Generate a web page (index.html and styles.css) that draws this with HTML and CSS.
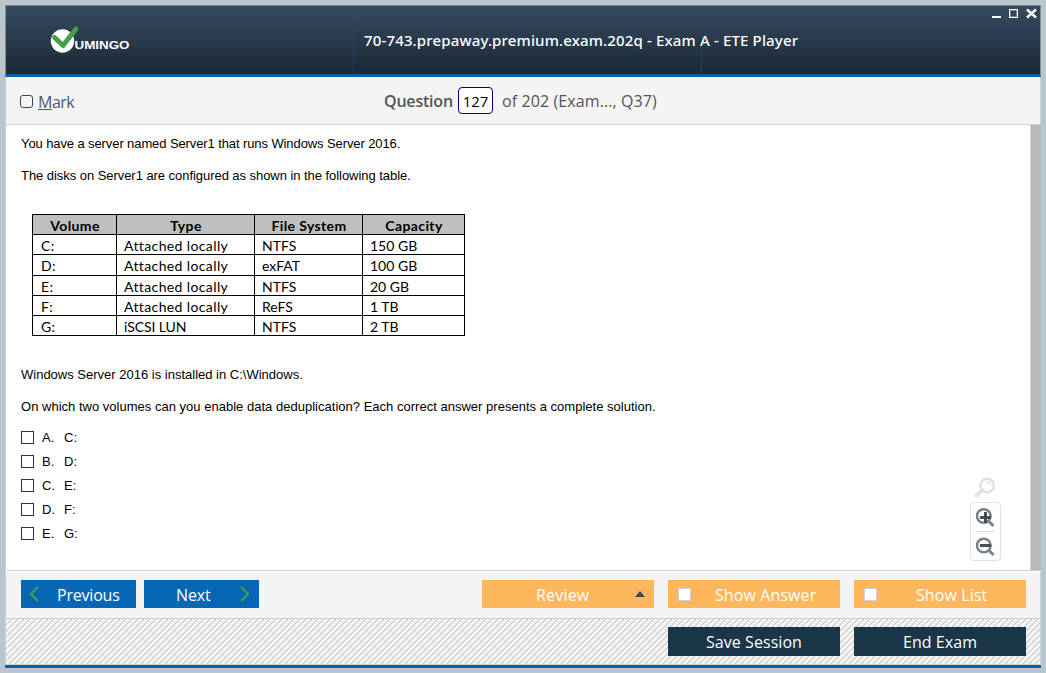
FILE: index.html
```html
<!DOCTYPE html>
<html lang="en">
<head>
<meta charset="utf-8">
<title>ETE Player</title>
<link rel="stylesheet" href="styles.css">
</head>
<body>
<div class="window">
  <header class="titlebar">
    <div class="brand">
      <svg class="logo" width="82" height="32" viewBox="0 0 82 32">
        <circle cx="12.5" cy="17" r="11.7" fill="#fff"/>
        <path d="M4.500 13.500 L13 21.500 L26 5" fill="none" stroke="#43a047" stroke-width="5" stroke-linecap="round" stroke-linejoin="round"/>
        <text x="24.500" y="25" textLength="55" lengthAdjust="spacingAndGlyphs" class="logo-text">UMINGO</text>
      </svg>
    </div>
    <h1 class="title">70-743.prepaway.premium.exam.202q - Exam A - ETE Player</h1>
    <div class="controls">
      <svg width="46" height="12" viewBox="0 0 46 12">
        <path d="M0 10h9" stroke="#fff" stroke-width="2"/>
        <rect x="17.5" y="2.5" width="8" height="8" fill="none" stroke="#fff"/>
        <rect x="18.5" y="3.5" width="6" height="6" fill="none" stroke="#7b7d80"/>
        <path d="M35 2.500l9 8M44 2.500l-9 8" stroke="#fff" stroke-width="2.4"/>
      </svg>
    </div>
  </header>
  <div class="toolbar">
    <div class="mark"><i class="mark-box"></i><span class="mark-text"><u>M</u>ark</span></div>
    <div class="counter"><b>Question</b><span class="number">127</span><span class="total">of 202 (Exam..., Q37)</span></div>
  </div>
  <main class="body">
    <div class="question">
      <p class="q1">You have a server named Server1 that runs Windows Server 2016.</p>
      <p class="q2">The disks on Server1 are configured as shown in the following table.</p>
      <table class="disks">
        <colgroup><col class="c1"><col class="c2"><col class="c3"><col class="c4"></colgroup>
        <tr><th>Volume</th><th>Type</th><th>File System</th><th>Capacity</th></tr>
        <tr><td>C:</td><td>Attached locally</td><td>NTFS</td><td>150 GB</td></tr>
        <tr class="tall"><td>D:</td><td>Attached locally</td><td>exFAT</td><td>100 GB</td></tr>
        <tr><td>E:</td><td>Attached locally</td><td>NTFS</td><td>20 GB</td></tr>
        <tr><td>F:</td><td>Attached locally</td><td>ReFS</td><td>1 TB</td></tr>
        <tr><td>G:</td><td>iSCSI LUN</td><td>NTFS</td><td>2 TB</td></tr>
      </table>
      <p class="q3">Windows Server 2016 is installed in C:\Windows.</p>
      <p class="q4">On which two volumes can you enable data deduplication? Each correct answer presents a complete solution.</p>
      <ul class="choices">
        <li><i class="box"></i><span class="letter">A.</span><span>C:</span></li>
        <li><i class="box"></i><span class="letter">B.</span><span>D:</span></li>
        <li><i class="box"></i><span class="letter">C.</span><span>E:</span></li>
        <li><i class="box"></i><span class="letter">D.</span><span>F:</span></li>
        <li><i class="box"></i><span class="letter">E.</span><span>G:</span></li>
      </ul>
    </div>
    <div class="zoom">
      <svg class="lens" width="22" height="22" viewBox="0 0 22 22" fill="none" stroke="#e0e0e0">
        <circle cx="13" cy="8.500" r="6.800" stroke-width="2.400"/>
        <path d="M13 5a3.500 3.500 0 0 1 3.500 3.500" stroke-width="1.500"/>
        <path d="M8.500 13L2.500 18.500" stroke-width="3.400" stroke-linecap="round"/>
      </svg>
      <div class="zoom-panel">
        <svg width="20" height="20" viewBox="0 0 20 20" fill="none">
          <circle cx="7.800" cy="8" r="6.800" stroke="#74838e" stroke-width="2.500"/>
          <path d="M12.500 13L17.500 18" stroke="#74838e" stroke-width="3"/>
          <path d="M4 9.500h11M9.500 4v11" stroke="#4d4d4d" stroke-width="3"/>
        </svg>
        <hr>
        <svg width="20" height="20" viewBox="0 0 20 20" fill="none">
          <circle cx="7.800" cy="8.500" r="6.800" stroke="#74838e" stroke-width="2.500"/>
          <path d="M12.500 13L17.500 18" stroke="#74838e" stroke-width="3"/>
          <path d="M4 8.500h11" stroke="#4d4d4d" stroke-width="3"/>
        </svg>
      </div>
    </div>
    <div class="scrollbar"></div>
  </main>
  <div class="navbar">
    <div class="btn blue prev"><svg width="10" height="16" viewBox="0 0 10 16"><path d="M9 1L2 8l7 7" fill="none" stroke="#43a047" stroke-width="2.2"/></svg><span>Previous</span></div>
    <div class="btn blue next"><span>Next</span><svg width="10" height="16" viewBox="0 0 10 16"><path d="M1 1l7 7l-7 7" fill="none" stroke="#43a047" stroke-width="2.2"/></svg></div>
    <div class="btn orange review"><span>Review</span><svg width="10" height="6" viewBox="0 0 10 6"><path d="M5 0L10 6H0z" fill="#34495e"/></svg></div>
    <div class="btn orange check"><i></i><span class="answer">Show Answer</span></div>
    <div class="btn orange check"><i></i><span class="list">Show List</span></div>
  </div>
  <footer class="actions">
    <svg class="hatch" width="1034" height="45">
      <defs><pattern id="stripes" width="6" height="6" patternUnits="userSpaceOnUse"><path d="M-1 7L7-1M-1 1L1-1M5 7L7 5" stroke="#bcbcbc" stroke-width="1"/></pattern></defs>
      <rect width="1034" height="45" fill="url(#stripes)"/>
    </svg>
    <div class="btn dark"><span class="save">Save Session</span></div>
    <div class="btn dark"><span class="end">End Exam</span></div>
  </footer>
</div>
</body>
</html>
```
FILE: styles.css
```css
* { box-sizing: border-box; }
body { margin: 0; padding: 5px; width: 1046px; height: 673px; overflow: hidden; background: #b9c6cc; font-family: "Liberation Sans", Arial, sans-serif; }
.window { width: 1036px; height: 663px; display: flex; flex-direction: column; background: #fff; }
.titlebar { height: 72px; display: grid; grid-template-columns: 348px 348px 1fr; background: linear-gradient(#354c60, #1b2835); border: 1px solid #7e8d94; border-top-color: #77898f; border-bottom: 3px solid #0560b0; flex: none; }
.brand { padding: 18px 0 0 44px; border-right: 1px dotted #30418c; }
.logo { display: block; }
.logo-text { font: bold 10.5px "Liberation Sans", sans-serif; fill: #fff; }
.title { margin: 0; padding: 22px 0 0 10px; border-right: 1px solid #2c4052; font: 500 15px/24px "Noto Sans", sans-serif; letter-spacing: .15px; color: #fff; white-space: nowrap; }
.controls { padding: 1px 0 0 290px; }
.controls svg { display: block; }
.toolbar { height: 48px; flex: none; display: grid; grid-template-columns: 363px 1fr; background: #f4f4f4; border: 1px solid #d0d0d0; border-top: 0; font-family: "Open Sans", sans-serif; color: #555; }
.mark { display: flex; padding: 13px 0 0 14px; font-size: 16px; line-height: 24px; color: #4b5a68; }
.mark-box { width: 13px; height: 13px; margin-top: 5px; border: 1px solid #34495e; border-radius: 3px; }
.mark-text { margin-left: 5px; letter-spacing: -.5px; }
.counter { display: flex; padding: 10px 0 0 15px; font-size: 16px; line-height: 28px; white-space: nowrap; }
.counter b { width: 74px; font-weight: 600; letter-spacing: -.2px; }
.number { width: 35px; height: 27px; line-height: 27px; border: 1px solid #00008b; border-radius: 4px; background: #fff; color: #000; text-align: center; font-size: 15px; }
.total { margin-left: 9px; letter-spacing: .1px; }
.body { height: 446px; flex: none; display: grid; grid-template-columns: 964px 60px 11px; border-bottom: 1px solid #d0d0d0; border-left: 1px solid #d0d0d0; }
.question { padding-left: 15px; font-size: 13px; line-height: 16px; }
.question p { margin: 16px 0 0; white-space: nowrap; }
.question .q1 { margin-top: 11px; letter-spacing: -.1px; }
.q2 { letter-spacing: -.05px; }
.q4 { letter-spacing: .015px; }
.disks { margin: 30px 0 0 11px; border-collapse: collapse; table-layout: fixed; width: 433px; font: 14px/18px Lato, sans-serif; letter-spacing: .38px; }
.c1 { width: 84px; } .c2 { width: 138px; } .c3 { width: 108px; } .c4 { width: 102px; }
.disks tr { height: 20px; }
.disks .tall { height: 21px; }
.disks th, .disks td { border: 1px solid #000; padding: 2px 0 0 7px; line-height: 17px; text-align: left; white-space: nowrap; }
.disks .tall td { padding-top: 0; }
.disks td:first-child { padding-left: 8px; }
.disks td:nth-child(3), .disks td:nth-child(4) { letter-spacing: 0; }
.disks tr:last-child td:nth-child(2) { letter-spacing: -.1px; }
.disks th { background: #bfbfbf; text-align: center; padding-left: 1px; font-weight: 700; }
.question .q3 { margin-top: 31px; }
.choices { list-style: none; margin: 15px 0 0; padding: 0; }
.choices li { display: flex; height: 24px; line-height: 16px; }
.box { width: 13px; height: 13px; margin: 1px 8px 0 0; border: 1px solid #333; }
.letter { width: 22px; }
.zoom { padding-top: 352px; }
.lens { display: block; margin-left: 4px; }
.zoom-panel { width: 31px; height: 59px; margin-top: 3px; padding: 5px 5px 0; border: 1px solid #e2e2e2; border-radius: 4px; }
.zoom-panel svg { display: block; }
.zoom-panel hr { height: 1px; margin: 3px 0 5px; border: 0; background: #ddd; }
.scrollbar { background: #bcbab6; border-left: 1px solid #d0d0d0; }
.navbar { height: 48px; flex: none; display: flex; padding: 8px 0 0 15px; background: #f4f4f4; border: 1px solid #d0d0d0; border-top-color: #fff; }
.btn { display: flex; align-items: center; height: 28px; flex: none; color: #fff; font: 16px/28px "Open Sans", sans-serif; white-space: nowrap; }
.btn span { padding-top: 2px; letter-spacing: -.1px; }
.btn svg { flex: none; }
.blue { width: 115px; margin-right: 8px; background: #0767b4; }
.prev { padding-left: 8px; } .prev span { width: 62px; margin-left: 18px; letter-spacing: -.2px; }
.next { padding-left: 32px; } .next span { width: 64px; }
.orange { width: 172px; margin-right: 14px; background: #ffb75d; }
.review { margin-left: 215px; padding-left: 54px; } .review span { width: 99px; letter-spacing: .2px; }
.check i { width: 13px; height: 13px; margin-left: 10px; background: #fff; border: 1px solid #d0d0d0; }
.btn .answer { margin-left: 24px; letter-spacing: .1px; } .btn .list { margin-left: 39px; letter-spacing: .1px; }
.actions { position: relative; height: 46px; flex: none; display: flex; padding: 8px 0 0 662px; border: 1px solid #d0d0d0; border-top: 0; background: #f4f4f4; }
.window::after { content: ""; height: 3px; flex: none; background: #0560b0; }
.hatch { position: absolute; left: 0; top: 0; }
.dark { position: relative; width: 172px; height: 29px; margin-right: 14px; background: #1b3549; justify-content: center; }
.dark span { padding-top: 0; letter-spacing: .05px; }
```
